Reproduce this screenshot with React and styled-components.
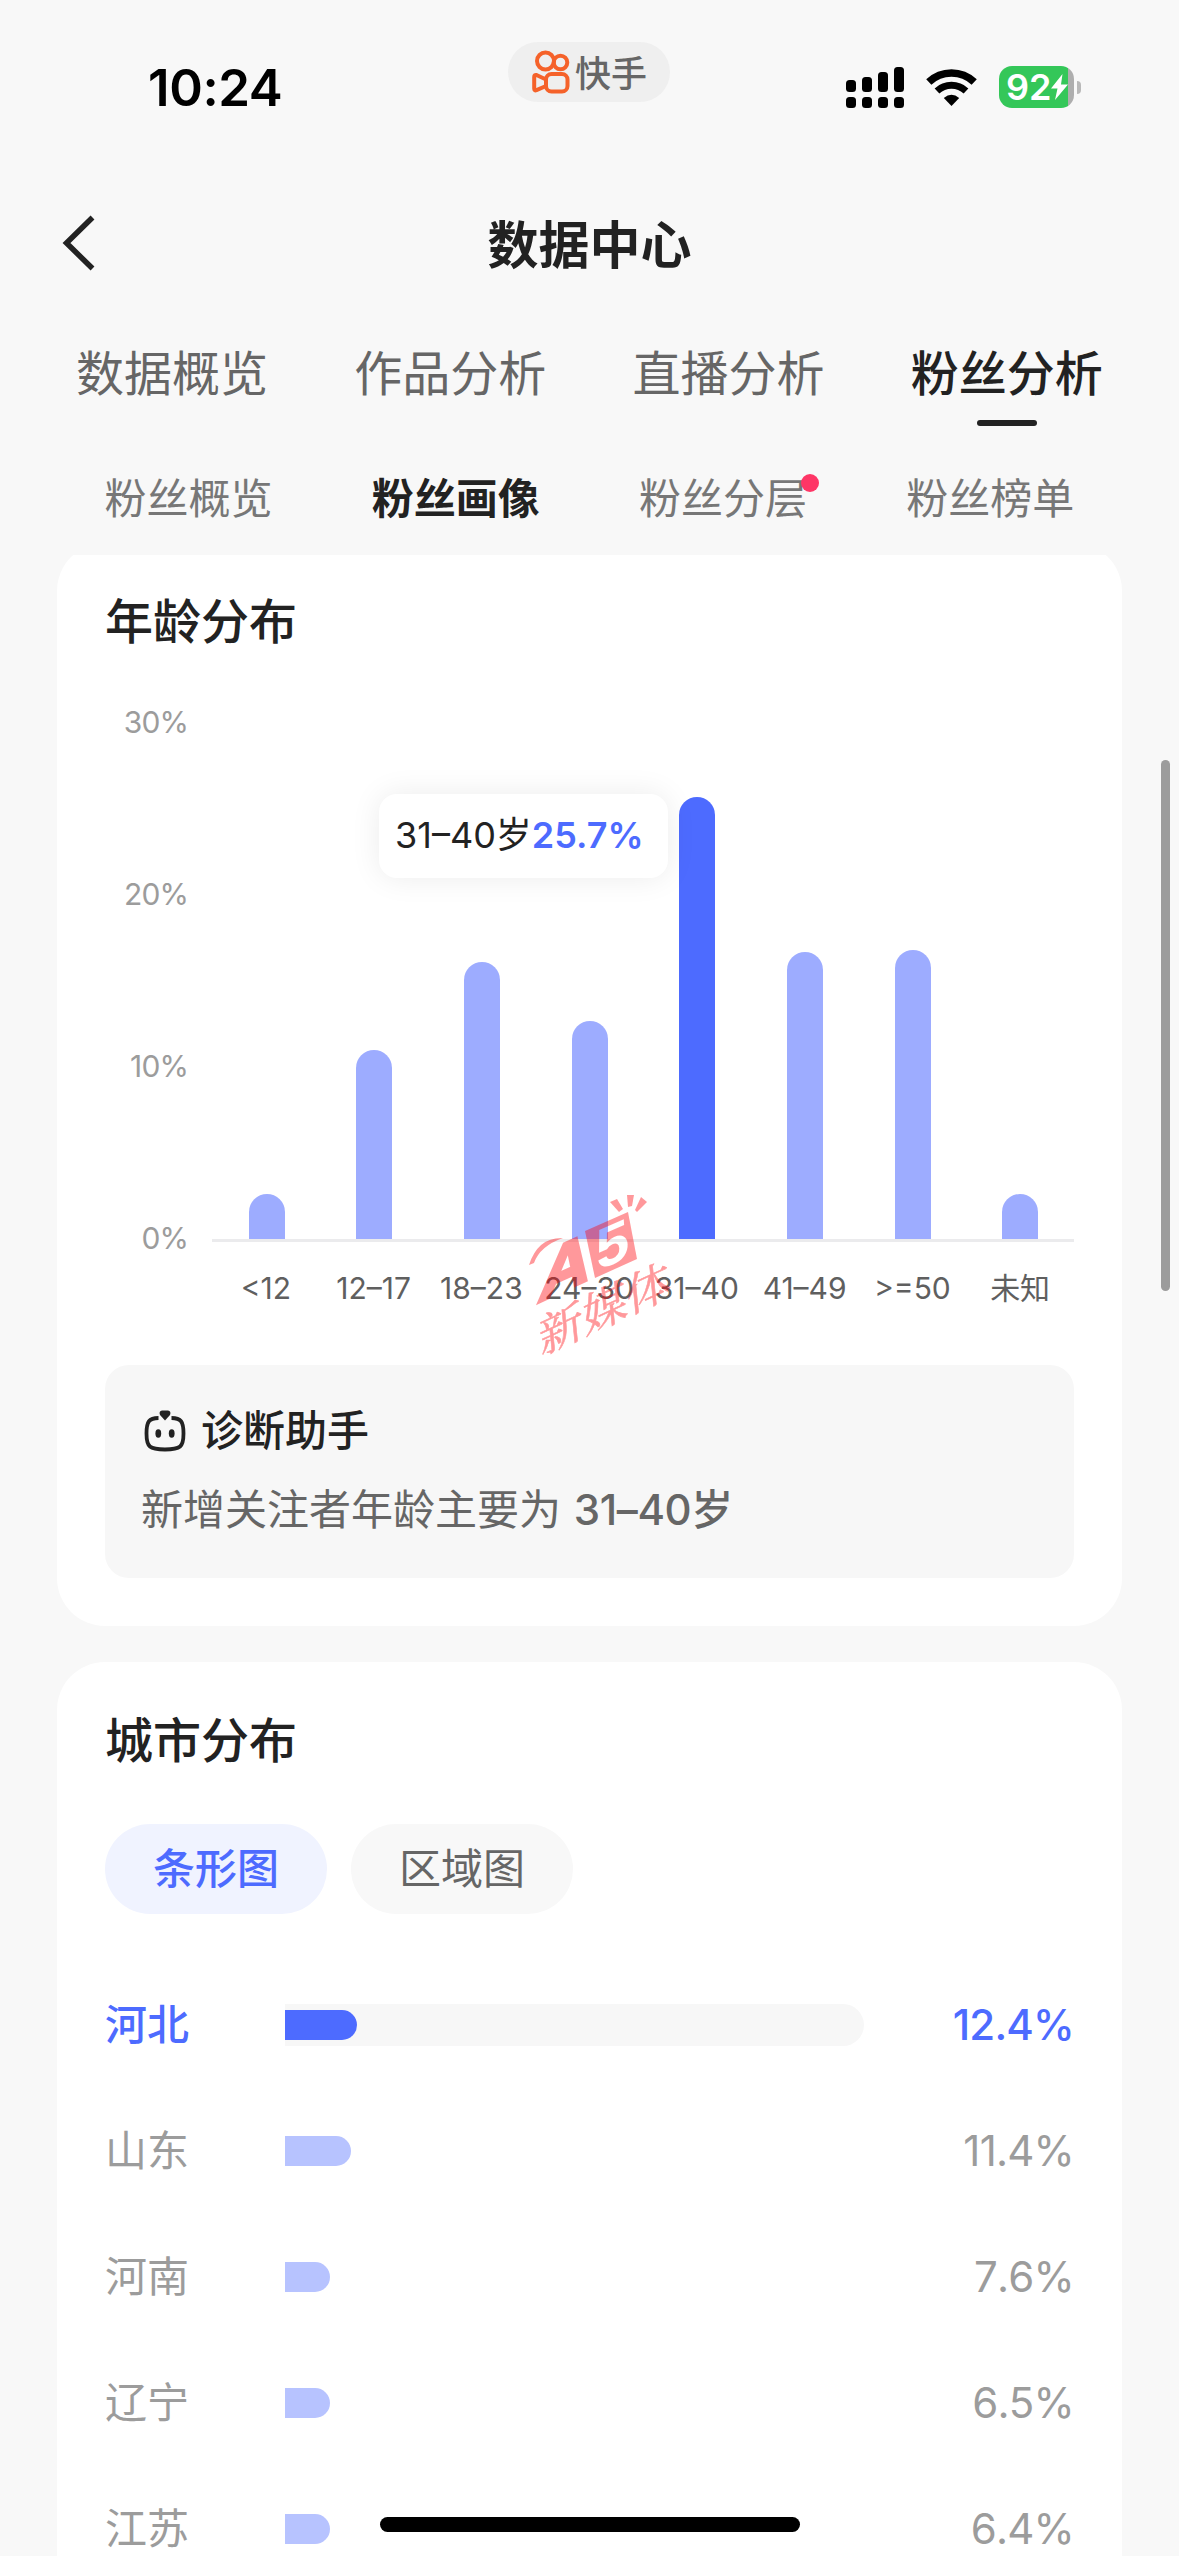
import React from "react";
import styled, { createGlobalStyle } from "styled-components";

const GlobalStyle = createGlobalStyle`
  * { box-sizing: border-box; }
  html, body { margin: 0; padding: 0; background: #f8f8f8; }
  body {
    font-family: Inter, "Noto Sans CJK SC", sans-serif;
    color: #222;
    -webkit-font-smoothing: antialiased;
  }
`;

const Screen = styled.div`
  position: relative;
  width: 1179px;
  height: 2556px;
  overflow: hidden;
  display: flex;
  flex-direction: column;
  background: #f8f8f8;
`;

/* ---------- status bar ---------- */

const StatusBar = styled.header`
  flex: none;
  height: 177px;
  display: grid;
  grid-template-columns: 508px 162px 1fr;
  align-items: start;
`;

const Clock = styled.div`
  padding: 58px 0 0 148px;
  font-size: 51px;
  line-height: 60px;
  font-weight: 600;
  letter-spacing: -0.4px;
  color: #000;
`;

const AppBadge = styled.div`
  margin-top: 42px;
  height: 60px;
  border-radius: 30px;
  background: #efefef;
  display: flex;
  align-items: center;
  gap: 5px;
  padding-left: 24px;
  font-size: 36px;
  font-weight: 500;
  color: #666;
  white-space: nowrap;
`;

const BadgeName = styled.span`
  line-height: 56px;
  padding-top: 4px;
`;

const StatusIcons = styled.div`
  margin-top: 66px;
  padding-left: 176px;
  display: flex;
  align-items: center;
`;

const WifiBox = styled.div`
  display: flex;
  margin: 0 22px 0 22px;
`;

const Battery = styled.div`
  width: 75px;
  height: 42px;
  border-radius: 13px;
  background: linear-gradient(90deg, #34c759 69px, #aeaeae 69px);
  display: flex;
  align-items: center;
  padding-left: 7px;
  color: #fff;
  font-size: 36px;
  font-weight: 600;
  line-height: 42px;
`;

const BatteryNub = styled.div`
  width: 4px;
  height: 13px;
  margin-left: 3px;
  border-radius: 0 4px 4px 0;
  background: #b9b9b9;
`;

/* ---------- navigation ---------- */

const NavBar = styled.nav`
  flex: none;
  height: 132px;
  display: grid;
  grid-template-columns: 160px 1fr 160px;
  align-items: center;
`;

const BackButton = styled.button`
  border: 0;
  background: none;
  padding: 0 0 0 60px;
  height: 132px;
  display: flex;
  align-items: center;
`;

const NavTitle = styled.h1`
  margin: 6px 0 0;
  text-align: center;
  font-size: 51px;
  line-height: 60px;
  font-weight: 600;
`;

const Tabs = styled.div`
  flex: none;
  height: 126px;
  padding: 0 33px;
  display: grid;
  grid-template-columns: repeat(4, 1fr);
`;

const Tab = styled.div`
  display: flex;
  flex-direction: column;
  align-items: center;
  padding-top: 35px;
  font-size: 48px;
  line-height: 60px;
  color: ${(p) => (p.$active ? "#222" : "#666")};
  font-weight: ${(p) => (p.$active ? 500 : 400)};

  &::after {
    content: "";
    width: 60px;
    height: 6px;
    margin-top: 16px;
    border-radius: 3px;
    background: ${(p) => (p.$active ? "#222" : "transparent")};
  }
`;

const SubTabs = styled.div`
  flex: none;
  height: 120px;
  padding: 0 55px;
  display: grid;
  grid-template-columns: repeat(4, 1fr);
  justify-items: center;
`;

const SubTab = styled.div`
  position: relative;
  align-self: start;
  margin-top: 39px;
  font-size: 42px;
  line-height: 50px;
  color: ${(p) => (p.$active ? "#222" : "#777")};
  font-weight: ${(p) => (p.$active ? 600 : 400)};
`;

const Dot = styled.span`
  position: absolute;
  top: 0;
  right: -12px;
  width: 18px;
  height: 18px;
  border-radius: 50%;
  background: #fe3666;
`;

/* ---------- cards ---------- */

const ScrollArea = styled.main`
  flex: 1;
  min-height: 0;
  overflow: hidden;
  padding: 0 57px;
`;

const Card = styled.section`
  background: #fff;
  border-radius: 48px;
  padding: 0 48px;
  margin-top: ${(p) => p.$top}px;
  height: ${(p) => p.$height}px;
`;

const CardTitle = styled.h2`
  margin: 0;
  padding-top: 50px;
  font-size: 48px;
  line-height: 58px;
  font-weight: 500;
`;

const Chart = styled.div`
  position: relative;
  margin-top: 53px;
  height: 661px;
  display: flex;
`;

const YAxis = styled.div`
  width: 83px;
  height: 552px;
  display: flex;
  flex-direction: column;
  justify-content: space-between;
  text-align: right;
  font-size: 30px;
  line-height: 36px;
  letter-spacing: -0.9px;
  color: #9c9c9c;
`;

const Plot = styled.div`
  margin-left: 24px;
  width: 862px;
  padding-top: 93px;
`;

const Bars = styled.div`
  height: 445px;
  border-bottom: 3px solid #ebebed;
  display: grid;
  grid-template-columns: repeat(8, 1fr);
  align-items: end;
  justify-items: center;
  padding-left: 1px;
`;

const Bar = styled.div`
  width: 36px;
  border-radius: 18px 18px 0 0;
  background: ${(p) => (p.$active ? "#4d6bff" : "#9dacff")};
`;

const XAxis = styled.div`
  margin-top: 28px;
  display: grid;
  grid-template-columns: repeat(8, 1fr);
  text-align: center;
  font-size: 30px;
  line-height: 36px;
  color: #5f5f5f;
  white-space: nowrap;
`;

const Tooltip = styled.div`
  position: absolute;
  left: 274px;
  top: 90px;
  width: 289px;
  height: 84px;
  border-radius: 18px;
  background: #fff;
  box-shadow: 0 0 30px rgba(0, 0, 0, 0.08);
  padding-left: 16px;
  font-size: 36px;
  line-height: 82px;
  white-space: nowrap;

  b {
    font-weight: 600;
    color: #4d6bff;
  }
`;

const Watermark = styled.svg`
  position: absolute;
  left: 415px;
  top: 490px;
`;

const Assistant = styled.div`
  height: 213px;
  border-radius: 24px;
  background: #f7f7f7;
  padding: 36px;
`;

const AssistantHead = styled.div`
  display: flex;
  align-items: center;
  height: 60px;
  line-height: 60px;
  gap: 12px;
  font-size: 42px;
  font-weight: 500;
`;

const AssistantText = styled.p`
  margin: 19px 0 0;
  font-size: 42px;
  line-height: 60px;
  color: #666;
  white-space: nowrap;

  b {
    font-weight: 500;
    margin-left: 1px;
    letter-spacing: -0.4px;
  }
`;

const Chips = styled.div`
  display: flex;
  gap: 24px;
  margin-top: 54px;
`;

const Chip = styled.button`
  border: 0;
  width: 222px;
  height: 90px;
  border-radius: 45px;
  padding: 0;
  font-family: inherit;
  font-size: 42px;
  line-height: 90px;
  font-weight: ${(p) => (p.$active ? 500 : 400)};
  color: ${(p) => (p.$active ? "#4d6bff" : "#666")};
  background: ${(p) => (p.$active ? "#f0f3ff" : "#f8f8f8")};
`;

const CityList = styled.div`
  margin-top: 48px;
`;

const CityRow = styled.div`
  height: 126px;
  display: grid;
  grid-template-columns: 180px 579px 1fr;
  align-items: center;
  font-size: 42px;
  line-height: 60px;
  font-weight: ${(p) => (p.$active ? 500 : 400)};
  color: ${(p) => (p.$active ? "#4d6bff" : "#9c9c9c")};
`;

const Track = styled.div`
  height: 42px;
  border-radius: 0 21px 21px 0;
  display: flex;
  align-items: center;
  background: ${(p) => (p.$active ? "#f7f7f7" : "transparent")};
`;

const Fill = styled.div`
  height: 30px;
  border-radius: 0 15px 15px 0;
  background: ${(p) => (p.$active ? "#4d6bff" : "#b7c3ff")};
`;

const Percent = styled.div`
  text-align: right;
  font-kerning: none;
  letter-spacing: -0.8px;
`;

const ScrollThumb = styled.div`
  position: absolute;
  right: 9px;
  top: 760px;
  width: 9px;
  height: 531px;
  border-radius: 5px;
  background: #9c9c9c;
`;

const HomeIndicator = styled.div`
  position: absolute;
  left: 380px;
  top: 2517px;
  width: 420px;
  height: 15px;
  border-radius: 8px;
  background: #000;
`;

/* ---------- drawings ---------- */

const KuaishouLogo = () => (
  <svg width="38" height="44" viewBox="0 0 38 44" fill="none" stroke="#f5622a" strokeWidth="4">
    <circle cx="13.5" cy="11" r="8.5" />
    <circle cx="28.5" cy="12.5" r="6.8" />
    <rect x="14" y="24" width="21.5" height="17.5" rx="5.5" />
    <path d="M14 29.5 L4.5 25 Q2.200 24.500 2.200 27 V38.500 Q2.200 41 4.500 40.200 L14 36" strokeLinejoin="round" />
  </svg>
);

const SignalIcon = () => (
  <svg width="58" height="42" viewBox="0 0 58 42" fill="#000">
    {[[0, 14], [16, 11], [32, 6], [48, 1]].map(([x, y]) => (
      <React.Fragment key={x}>
        <rect x={x} y={y} width="10" height={26 - y} rx="3.500" />
        <rect x={x} y="31" width="10" height="11" rx="3.500" />
      </React.Fragment>
    ))}
  </svg>
);

const WifiIcon = () => (
  <svg width="51" height="38" viewBox="0 0 51 38" fill="none" stroke="#000">
    <path d="M2.800 14 A33 33 0 0 1 48.200 14" strokeWidth="7.500" />
    <path d="M11 23 A21.500 21.500 0 0 1 40 23" strokeWidth="7" />
    <path d="M25.500 38 L17.800 30 Q25.500 23.500 33.200 30 Z" fill="#000" stroke="none" />
  </svg>
);

const BoltIcon = () => (
  <svg width="17" height="26" viewBox="0 0 17 26" fill="#fff">
    <path d="M11.500 0 L0 14.500 H6.500 L4 26 L17 10.500 H10 Z" />
  </svg>
);

const ChevronIcon = () => (
  <svg width="36" height="56" viewBox="0 0 36 56" fill="none" stroke="#222" strokeWidth="5.500">
    <path d="M32.500 2.500 L6.500 28 L32.500 53.500" />
  </svg>
);

const RobotIcon = () => (
  <svg width="48" height="48" viewBox="0 0 48 48" fill="none">
    <path
      d="M17.500 11 C8 11 5.500 14.500 5.500 26.500 C5.500 40 8.500 42.500 24 42.500 C39.500 42.500 42.500 40 42.500 26.500 C42.500 14.500 40 11 30.500 11"
      stroke="#222"
      strokeWidth="3.800"
    />
    <path d="M24 13.500 L19 8 Q17.500 4 21 3.500 H27 Q30.500 4 29 8 Z" fill="#222" />
    <ellipse cx="17.300" cy="26.500" rx="2.900" ry="4.200" fill="#222" />
    <ellipse cx="30.700" cy="26.500" rx="2.900" ry="4.200" fill="#222" />
  </svg>
);

const WatermarkMark = () => (
  <Watermark width="160" height="174" viewBox="0 0 160 174" fill="#ff0008" opacity="0.4">
    <defs>
      <mask id="five">
        <rect width="160" height="174" fill="#fff" />
        <text
          transform="matrix(1.1 -0.48 0.06 1.05 77 77)"
          fontFamily="Liberation Sans"
          fontWeight="700"
          fontSize="54"
          fill="#000"
        >
          5
        </text>
      </mask>
    </defs>
    <path d="M90 8 L97 5 L103 15 L99 18 Z" />
    <path d="M107 1 H114 L112 12 L108 13 Z" />
    <path d="M121 3 L127 8 L117 18 L115 16 Z" />
    <path d="M65 37 L108 18 L117 65 L75 84 Z" mask="url(#five)" />
    <path d="M9 71 Q18 43 43 44 Q20 52 14 69 Z" />
    <text
      transform="matrix(1 -0.46 -0.16 1.04 17 109)"
      fontFamily="Liberation Sans"
      fontWeight="700"
      fontSize="70"
      stroke="#ff0008"
      strokeWidth="3.500"
    >
      A
    </text>
    <text
      transform="matrix(0.97 -0.45 0.1 1 21 161)"
      fontFamily="Noto Serif CJK SC, Noto Sans CJK SC, sans-serif"
      fontSize="45"
      stroke="#ff0008"
      strokeWidth="0.600"
    >
      新媒体
    </text>
  </Watermark>
);

/* ---------- data ---------- */

const tabs = ["数据概览", "作品分析", "直播分析", "粉丝分析"];
const subTabs = ["粉丝概览", "粉丝画像", "粉丝分层", "粉丝榜单"];

const ages = [
  { label: "<12", height: 45 },
  { label: "12–17", height: 189 },
  { label: "18–23", height: 277 },
  { label: "24–30", height: 218 },
  { label: "31–40", height: 442, active: true },
  { label: "41–49", height: 287 },
  { label: ">=50", height: 289 },
  { label: "未知", height: 45 },
];

const cities = [
  { name: "河北", value: "12.4%", width: 72, active: true },
  { name: "山东", value: "11.4%", width: 66 },
  { name: "河南", value: "7.6%", width: 45 },
  { name: "辽宁", value: "6.5%", width: 45 },
  { name: "江苏", value: "6.4%", width: 45 },
];

export default function App() {
  return (
    <Screen>
      <GlobalStyle />
      <StatusBar>
        <Clock>10:24</Clock>
        <AppBadge>
          <KuaishouLogo />
          <BadgeName>快手</BadgeName>
        </AppBadge>
        <StatusIcons>
          <SignalIcon />
          <WifiBox>
            <WifiIcon />
          </WifiBox>
          <Battery>
            92
            <BoltIcon />
          </Battery>
          <BatteryNub />
        </StatusIcons>
      </StatusBar>

      <NavBar>
        <BackButton aria-label="返回">
          <ChevronIcon />
        </BackButton>
        <NavTitle>数据中心</NavTitle>
      </NavBar>

      <Tabs>
        {tabs.map((t, i) => (
          <Tab key={t} $active={i === 3}>
            {t}
          </Tab>
        ))}
      </Tabs>
      <SubTabs>
        {subTabs.map((t, i) => (
          <SubTab key={t} $active={i === 1}>
            {t}
            {i === 2 && <Dot />}
          </SubTab>
        ))}
      </SubTabs>

      <ScrollArea>
        <Card $top={-12} $height={1083}>
          <CardTitle>年龄分布</CardTitle>
          <Chart>
            <YAxis>
              <span>30%</span>
              <span>20%</span>
              <span>10%</span>
              <span>0%</span>
            </YAxis>
            <Plot>
              <Bars>
                {ages.map((a) => (
                  <Bar key={a.label} $active={a.active} style={{ height: a.height }} />
                ))}
              </Bars>
              <XAxis>
                {ages.map((a) => (
                  <span key={a.label}>{a.label}</span>
                ))}
              </XAxis>
            </Plot>
            <Tooltip>
              31–40岁<b>25.7%</b>
            </Tooltip>
            <WatermarkMark />
          </Chart>
          <Assistant>
            <AssistantHead>
              <RobotIcon />
              诊断助手
            </AssistantHead>
            <AssistantText>
              新增关注者年龄主要为 <b>31–40岁</b>
            </AssistantText>
          </Assistant>
        </Card>

        <Card $top={36} $height={1100}>
          <CardTitle>城市分布</CardTitle>
          <Chips>
            <Chip $active>条形图</Chip>
            <Chip>区域图</Chip>
          </Chips>
          <CityList>
            {cities.map((c) => (
              <CityRow key={c.name} $active={c.active}>
                <span>{c.name}</span>
                <Track $active={c.active}>
                  <Fill $active={c.active} style={{ width: c.width }} />
                </Track>
                <Percent>{c.value}</Percent>
              </CityRow>
            ))}
          </CityList>
        </Card>
      </ScrollArea>

      <ScrollThumb />
      <HomeIndicator />
    </Screen>
  );
}
